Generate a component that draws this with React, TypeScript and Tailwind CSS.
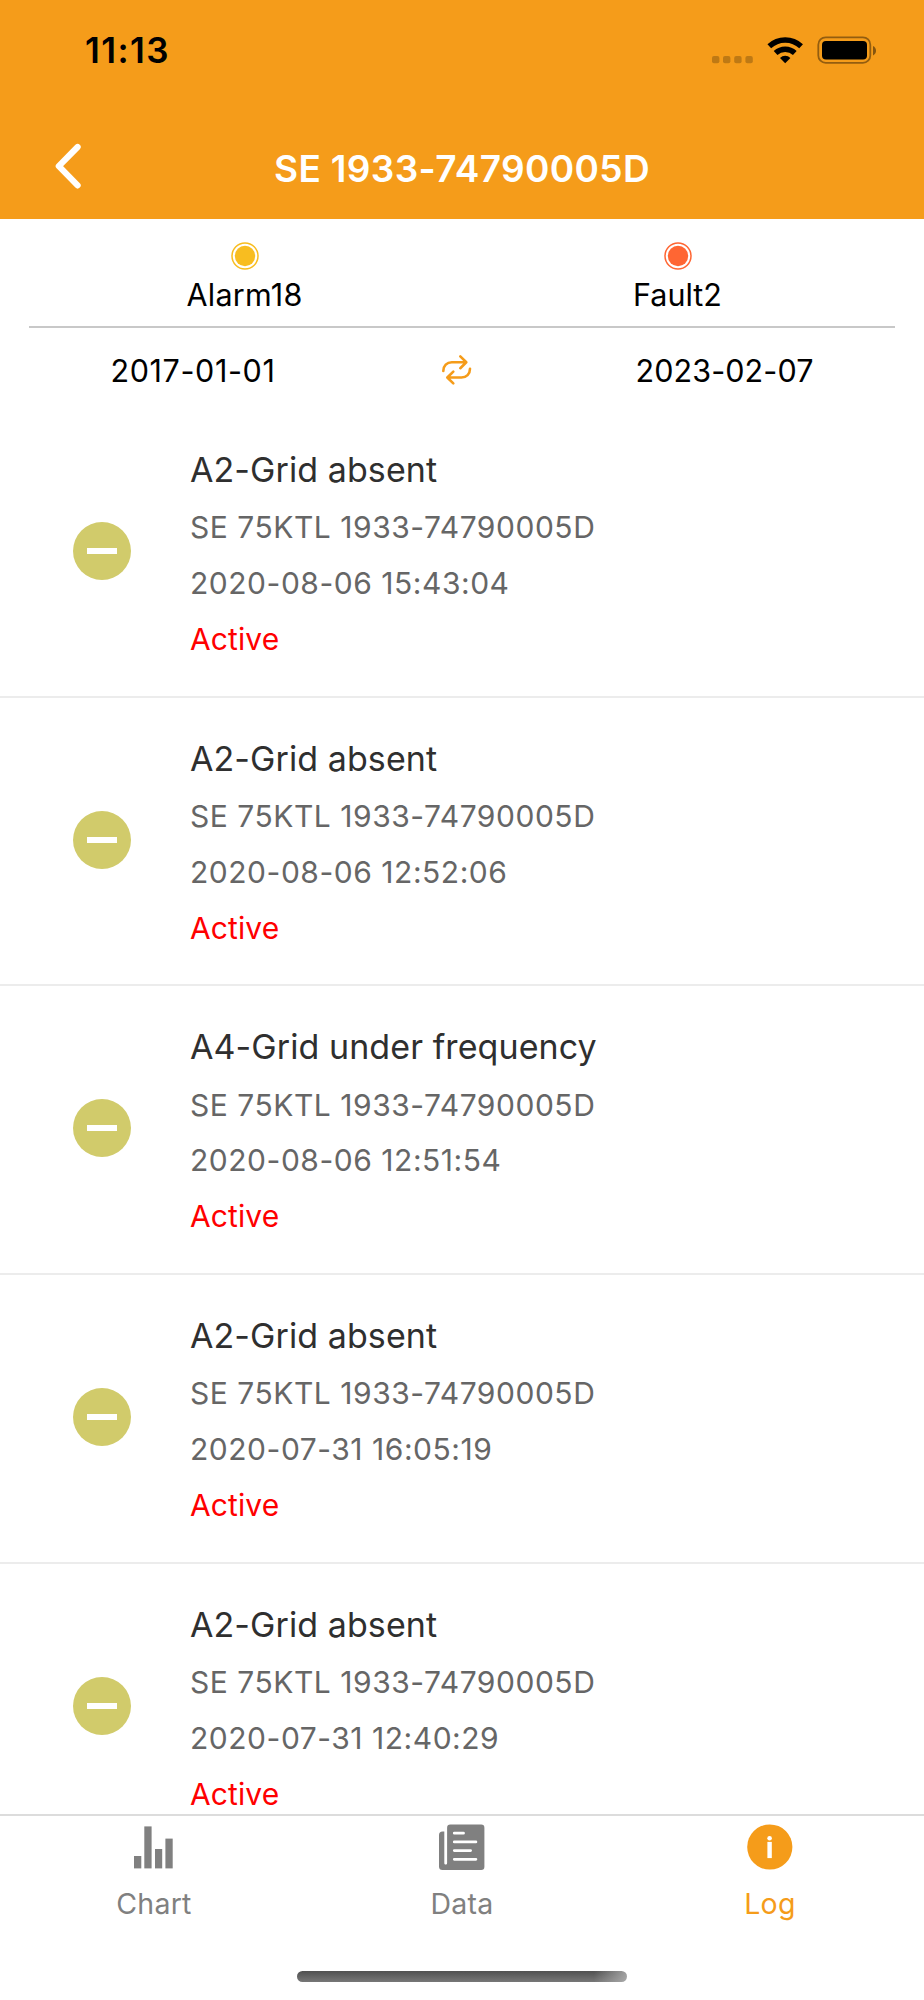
import React, { useState } from "react";
import clsx from "clsx";

interface LogModel {
  logId: number;
  title: string;
  device: string;
  date: string;
  status: string;
}

const logs: LogModel[] = [
  {
    logId: 1,
    title: "A2-Grid absent",
    device: "SE 75KTL 1933-74790005D",
    date: "2020-08-06 15:43:04",
    status: "Active",
  },
  {
    logId: 2,
    title: "A2-Grid absent",
    device: "SE 75KTL 1933-74790005D",
    date: "2020-08-06 12:52:06",
    status: "Active",
  },
  {
    logId: 3,
    title: "A4-Grid under frequency",
    device: "SE 75KTL 1933-74790005D",
    date: "2020-08-06 12:51:54",
    status: "Active",
  },
  {
    logId: 4,
    title: "A2-Grid absent",
    device: "SE 75KTL 1933-74790005D",
    date: "2020-07-31 16:05:19",
    status: "Active",
  },
  {
    logId: 5,
    title: "A2-Grid absent",
    device: "SE 75KTL 1933-74790005D",
    date: "2020-07-31 12:40:29",
    status: "Active",
  },
];

// STATUS BAR
const StatusBar: React.FC = () => {
  return (
    <div className="h-[101px] flex items-start justify-between pl-[85px] pr-[47px] pt-[30px]">
      <span className="text-[35px] leading-[41px] tracking-[1.4px] font-semibold text-black">
        11:13
      </span>
      <svg width="166" height="30" viewBox="711 35 166 30" className="mt-[5px]">
        {/* no signal */}
        <g fill="#000" opacity="0.22">
          <rect x="712" y="56" width="7.4" height="7.2" rx="2" />
          <rect x="723" y="56" width="7.4" height="7.2" rx="2" />
          <rect x="734.2" y="56" width="7.4" height="7.2" rx="2" />
          <rect x="745.4" y="56" width="7.4" height="7.2" rx="2" />
        </g>
        {/* wifi */}
        <g fill="none" stroke="#000" strokeWidth="5.4">
          <path d="M769.3 46.3a23.2 23.2 0 0 1 31.8 0" />
          <path d="M775.6 53a14 14 0 0 1 19.2 0" />
        </g>
        <path d="M785.2 63.2l-5.2-5.3a7.6 7.6 0 0 1 10.4 0z" fill="#000" />
        {/* battery */}
        <rect
          x="818.3"
          y="37.3"
          width="52"
          height="25.6"
          rx="7.4"
          fill="none"
          stroke="#000"
          strokeOpacity="0.4"
          strokeWidth="1.8"
        />
        <rect x="822" y="41" width="45" height="18.6" rx="4" fill="#000" />
        <path d="M873 46v9.4c4-1.6 4-7.8 0-9.4z" fill="#000" opacity="0.45" />
      </svg>
    </div>
  );
};

const StatusDot: React.FC<{ color: string }> = ({ color }) => {
  return (
    <svg width="28" height="28" viewBox="0 0 28 28">
      <circle cx="14" cy="14" r="13" fill="none" stroke={color} strokeWidth="1.5" />
      <circle cx="14" cy="14" r="10.2" fill={color} />
    </svg>
  );
};

const LogItem: React.FC<{ log: LogModel }> = ({ log }) => {
  return (
    <div className="h-[288.7px] shrink-0 flex border-b-2 border-[#ececec]">
      <div className="w-[190px] pl-[73px] pt-[113px]">
        <div className="w-[58px] h-[58px] rounded-full bg-[#d1cb6b] flex items-center justify-center">
          <div className="w-[30px] h-[6px] bg-white"></div>
        </div>
      </div>
      <div className="pt-[31px] text-[30px] leading-[55.7px] tracking-[0.53px] text-[#666]">
        <h3 className="text-[34px] leading-[60.4px] tracking-[0.08px] text-[#2f2f2f]">
          {log.title}
        </h3>
        <p>{log.device}</p>
        <p>{log.date}</p>
        <p className="tracking-[0.1px] text-[#ff0000]">{log.status}</p>
      </div>
    </div>
  );
};

const ChartIcon = () => (
  <svg width="46" height="46" viewBox="131 1824 46 46" fill="currentColor">
    <rect x="134" y="1856" width="7.3" height="12.4" />
    <rect x="144.3" y="1826.4" width="7.3" height="42" />
    <rect x="155" y="1849" width="7.2" height="19.4" />
    <rect x="165.4" y="1838.6" width="7.3" height="29.8" />
  </svg>
);

const DataIcon = () => (
  <svg width="46" height="46" viewBox="439 1824 46 46">
    <path
      d="M444.3 1831.6h-1.8a3.5 3.5 0 0 0-3.5 3.5v31.3a3.5 3.5 0 0 0 3.5 3.5h38.7a3.2 3.2 0 0 0 3.2-3.2v-39a3.2 3.2 0 0 0-3.2-3.2h-30.9a3.2 3.2 0 0 0-3.2 3.2v35.2c0 2-2.8 2-2.8 0z"
      fill="currentColor"
    />
    <path
      d="M454.3 1833.2h9.2M454.3 1841.9h21.6M454.3 1850.6h16.3M454.3 1859.3h21.6"
      fill="none"
      stroke="#fff"
      strokeWidth="2.8"
      strokeLinecap="round"
    />
  </svg>
);

const LogIcon = () => (
  <svg width="46" height="46" viewBox="0 0 46 46">
    <circle cx="22.8" cy="23" r="22.6" fill="currentColor" />
    <circle cx="22.6" cy="14.3" r="2.3" fill="#fff" />
    <rect x="20.4" y="17.9" width="4.4" height="16.2" fill="#fff" />
  </svg>
);

const tabs = [
  { name: "Chart", icon: <ChartIcon /> },
  { name: "Data", icon: <DataIcon /> },
  { name: "Log", icon: <LogIcon /> },
];

const App: React.FC = () => {
  const [activeTab, setActiveTab] = useState("Log");

  return (
    <div className="w-[924px] h-[2000px] overflow-hidden flex flex-col bg-white font-['Inter',sans-serif]">
      {/* header */}
      <header className="h-[219px] shrink-0 bg-[#f59c1a]">
        <StatusBar />
        <div className="h-[118px] flex items-center pl-[53px] pt-[17px]">
          <svg width="30" height="48" viewBox="54 142 30 48" className="-mt-[5px]">
            <path
              d="M78.6 147L59.8 166.2l18.8 19.2"
              fill="none"
              stroke="#fff"
              strokeWidth="6.2"
              strokeLinecap="round"
              strokeLinejoin="round"
            />
          </svg>
          <h1 className="flex-1 pr-[83px] text-center text-[37px] leading-[44px] tracking-[0.35px] font-semibold text-white">
            SE 1933-74790005D
          </h1>
        </div>
      </header>

      {/* alarm and fault totals */}
      <section className="h-[109px] mx-[29px] shrink-0 flex border-b-2 border-[#c8c8c8] text-[30.5px] leading-[36px] text-black">
        <div className="w-1/2 flex flex-col items-center pt-[23px] pr-[2px]">
          <StatusDot color="#f8bd20" />
          <span className="mt-[7px] tracking-[0.25px]">Alarm18</span>
        </div>
        <div className="w-1/2 flex flex-col items-center pt-[23px] pr-[2px]">
          <StatusDot color="#ff6633" />
          <span className="mt-[7px]">Fault2</span>
        </div>
      </section>

      {/* date range */}
      <section className="h-[81px] shrink-0 flex items-center pt-[5px] text-[30.5px] leading-[36px] text-black">
        <span className="w-[386px] text-center tracking-[0.6px]">
          2017-01-01
        </span>
        <div className="w-[141px] flex justify-center">
          <svg
            width="32"
            height="32"
            viewBox="440 354 32 32"
            fill="none"
            stroke="#f59c1a"
            strokeWidth="2.6"
            strokeLinecap="round"
            strokeLinejoin="round"
            className="-mt-[2px]"
          >
            <path d="M442.3 371c0-5.2 3.6-8.7 8.5-8.7h14.4M459.3 356.4l6 5.9-6 5.9" />
            <path d="M469 368.8c0 5.2-3.6 8.7-8.5 8.7h-14M452.3 371.6l-6 5.9 6 5.9" />
          </svg>
        </div>
        <span className="w-[395px] text-center tracking-[0.1px]">
          2023-02-07
        </span>
      </section>

      {/* logs */}
      <main className="flex-1 min-h-0 overflow-hidden flex flex-col">
        {logs.map((log) => (
          <LogItem key={log.logId} log={log} />
        ))}
      </main>

      {/* tabs */}
      <nav className="h-[186px] shrink-0 border-t-2 border-[#dcdcdc] bg-white">
        <div className="flex h-[155px]">
          {tabs.map((tab) => (
            <button
              key={tab.name}
              className={clsx(
                "w-1/3 flex flex-col items-center pt-[8px] text-[28.5px] leading-[36px] tracking-[0.25px]",
                activeTab === tab.name ? "text-[#f59c1a]" : "text-[#808080]"
              )}
              onClick={() => setActiveTab(tab.name)}
            >
              {tab.icon}
              <span className="mt-[16px]">{tab.name}</span>
            </button>
          ))}
        </div>
        <div className="w-[330px] h-[11px] mx-auto rounded-full bg-[linear-gradient(to_right,transparent_90%,#bbbb_100%),linear-gradient(to_bottom,#505050,#777)]"></div>
      </nav>
    </div>
  );
};

export default App;
